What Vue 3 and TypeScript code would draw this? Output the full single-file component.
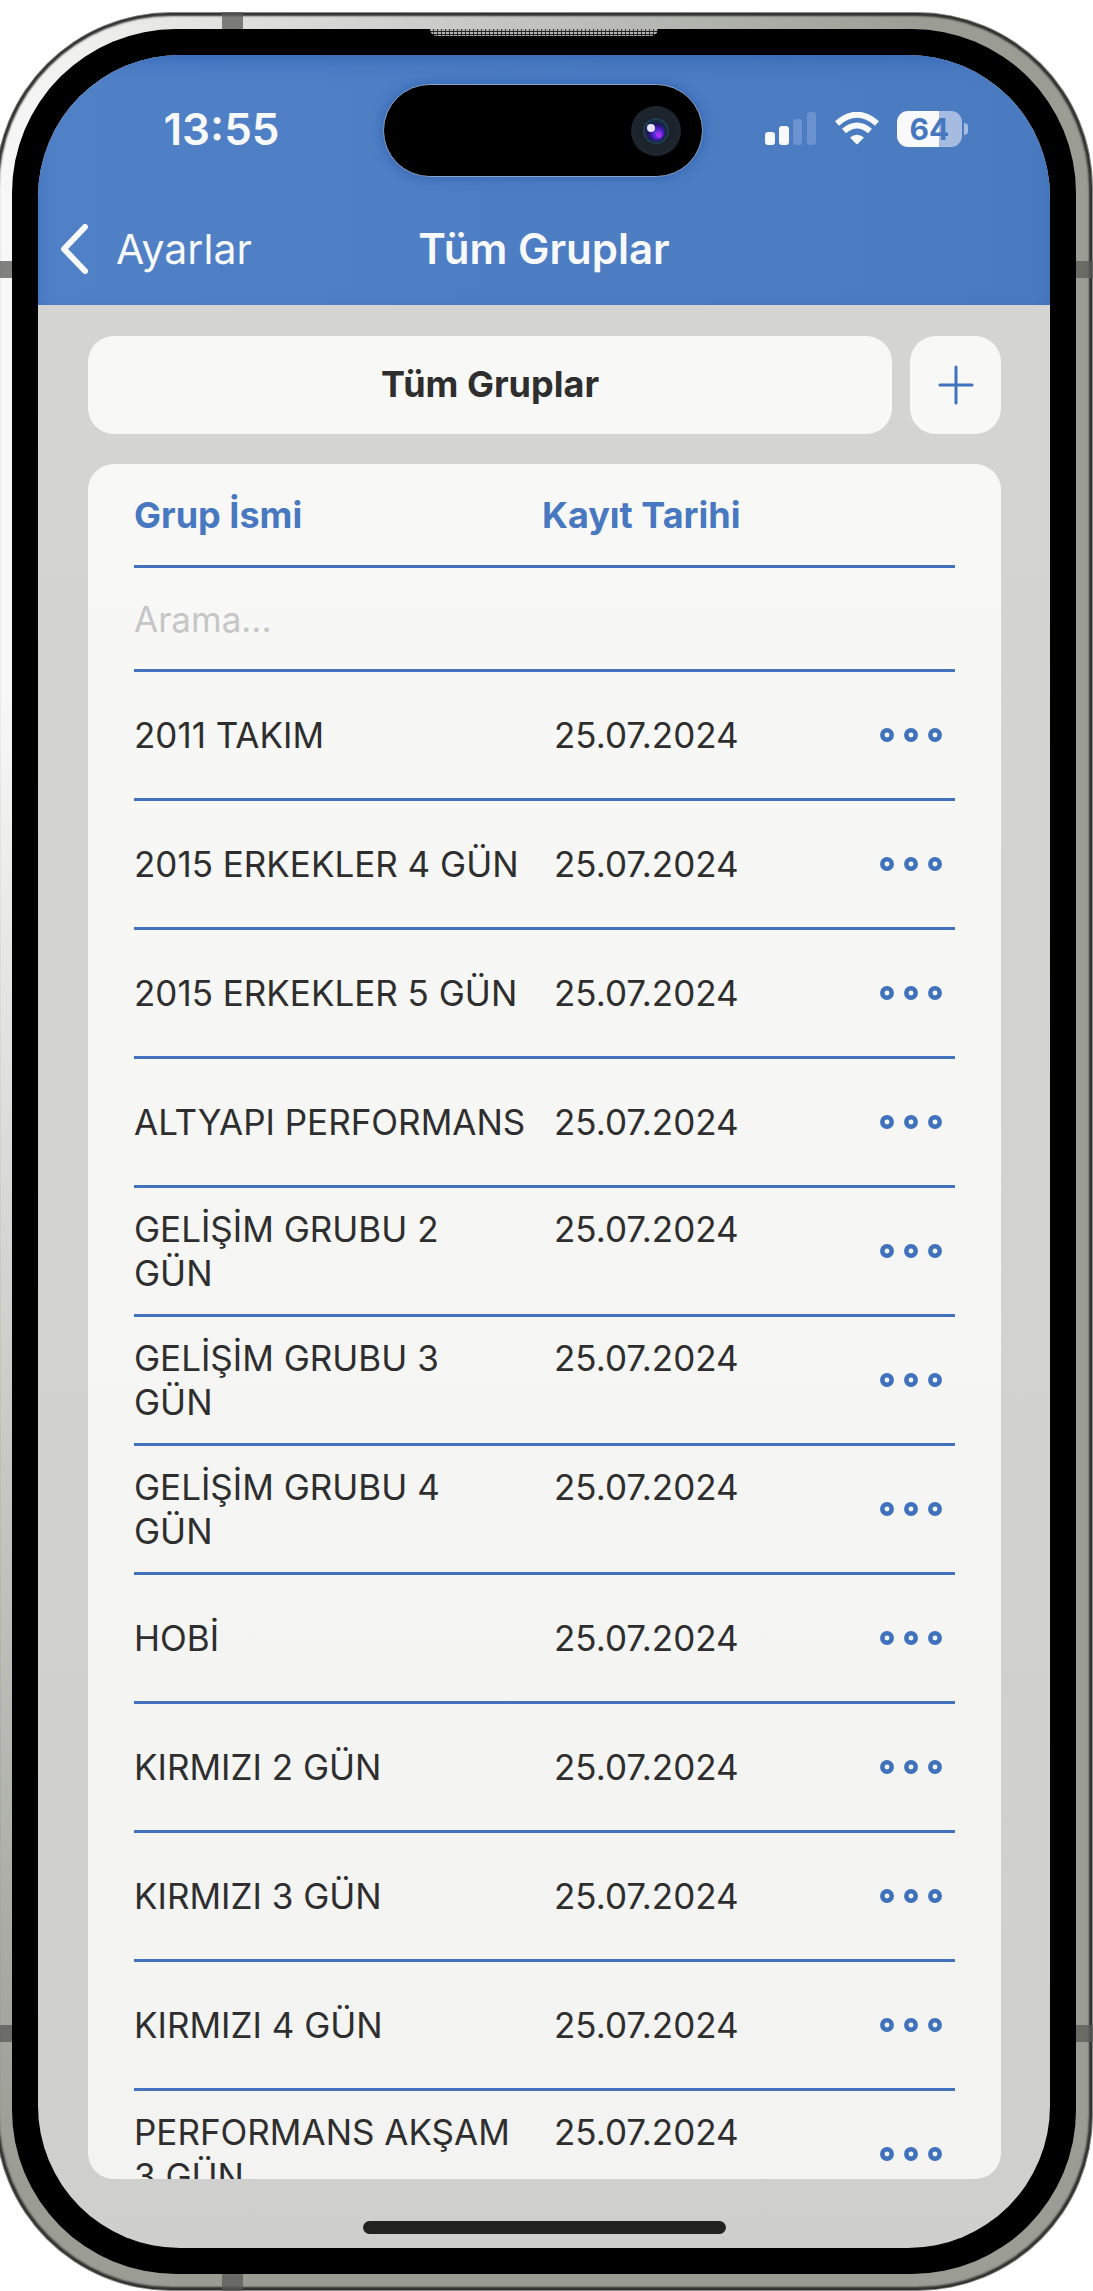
<script setup lang="ts">
interface Group {
  name: string
  date: string
}

const date = '25.07.2024'
const names: string[] = [
  '2011 TAKIM',
  '2015 ERKEKLER 4 GÜN',
  '2015 ERKEKLER 5 GÜN',
  'ALTYAPI PERFORMANS',
  'GELİŞİM GRUBU 2\nGÜN',
  'GELİŞİM GRUBU 3\nGÜN',
  'GELİŞİM GRUBU 4\nGÜN',
  'HOBİ',
  'KIRMIZI 2 GÜN',
  'KIRMIZI 3 GÜN',
  'KIRMIZI 4 GÜN',
  'PERFORMANS AKŞAM\n3 GÜN',
]
const groups: Group[] = names.map((name) => ({ name, date }))
</script>

<template>
  <div class="stage">
    <div class="phone">
      <span class="band band-top"></span>
      <span class="band band-bottom"></span>
      <span class="band band-left upper"></span>
      <span class="band band-left lower"></span>
      <span class="band band-right upper"></span>
      <span class="band band-right lower"></span>
      <div class="bezel">
        <span class="speaker"></span>
        <div class="screen">
          <header class="top">
            <div class="status">
              <span class="time">13:55</span>
              <div class="island">
                <svg class="camera" viewBox="0 0 50 50" aria-hidden="true">
                  <defs>
                    <radialGradient id="lens">
                      <stop offset="0" stop-color="#1c2a3c" />
                      <stop offset="0.55" stop-color="#1b222b" />
                      <stop offset="1" stop-color="#20262e" />
                    </radialGradient>
                    <radialGradient id="glass" cx="0.6" cy="0.6">
                      <stop offset="0" stop-color="#7a4be8" />
                      <stop offset="0.6" stop-color="#4a1fc0" />
                      <stop offset="1" stop-color="#24106e" />
                    </radialGradient>
                  </defs>
                  <circle cx="25" cy="25" r="25" fill="url(#lens)" />
                  <circle cx="25" cy="25" r="12" fill="#14283e" stroke="#1f3d54" stroke-width="2" />
                  <circle cx="25" cy="26" r="9" fill="url(#glass)" />
                  <circle cx="28" cy="29" r="3" fill="#a32cf0" />
                  <circle cx="20" cy="22" r="4" fill="#e6e4ff" />
                </svg>
              </div>
              <div class="indicators">
                <svg width="52" height="34" viewBox="0 0 52 34" aria-hidden="true">
                  <rect x="0" y="20" width="10" height="13" rx="3" fill="#f8f9fa" />
                  <rect x="14" y="14" width="10" height="19" rx="3" fill="#f8f9fa" />
                  <rect x="28" y="7" width="9" height="26" rx="3" fill="#6a93d0" />
                  <rect x="42" y="0" width="9" height="33" rx="3" fill="#6a93d0" />
                </svg>
                <svg width="44" height="34" viewBox="0 0 44 34" aria-hidden="true">
                  <g fill="none" stroke="#f8f9fa">
                    <path d="M2 11.500Q22-6 42 11.500" stroke-width="6" />
                    <path d="M9 19Q22 8 35 19" stroke-width="6" />
                  </g>
                  <path d="M15 25.500Q22 20 29 25.500L22.700 32Q22 32.700 21.300 32Z" fill="#f8f9fa" />
                </svg>
                <div class="battery"><span class="cell">64</span><span class="nub"></span></div>
              </div>
            </div>
            <nav class="bar">
              <a class="back" href="#">
                <svg width="28" height="50" viewBox="0 0 28 50" aria-hidden="true">
                  <path d="M25 3L4 25L25 47" fill="none" stroke="#f8f9fa" stroke-width="6" stroke-linecap="round" stroke-linejoin="round" />
                </svg>
                <span>Ayarlar</span>
              </a>
              <h1>Tüm Gruplar</h1>
            </nav>
          </header>
          <main class="content">
            <div class="actions">
              <button class="all" type="button">Tüm Gruplar</button>
              <button class="add" type="button" aria-label="Grup ekle">
                <svg width="36" height="40" viewBox="0 0 36 40" aria-hidden="true">
                  <path d="M18 2V38M2 20H34" stroke="#3f71bd" stroke-width="3" stroke-linecap="round" />
                </svg>
              </button>
            </div>
            <section class="card">
              <table>
                <thead>
                  <tr class="head">
                    <th scope="col">Grup İsmi</th>
                    <th scope="col">Kayıt Tarihi</th>
                  </tr>
                  <tr class="search">
                    <td><input type="search" placeholder="Arama..." aria-label="Arama" /></td>
                  </tr>
                </thead>
                <tbody>
                  <tr v-for="group in groups" :key="group.name">
                    <td class="name">{{ group.name }}</td>
                    <td>{{ group.date }}</td>
                    <td class="more">
                      <button type="button" :aria-label="group.name">
                        <svg width="62" height="14" viewBox="0 0 62 14" aria-hidden="true">
                          <g fill="none" stroke="#3f71bd" stroke-width="4.500">
                            <circle cx="7" cy="7" r="4.700" />
                            <circle cx="31" cy="7" r="4.700" />
                            <circle cx="55" cy="7" r="4.700" />
                          </g>
                        </svg>
                      </button>
                    </td>
                  </tr>
                </tbody>
              </table>
            </section>
          </main>
          <div class="home"></div>
        </div>
      </div>
    </div>
  </div>
</template>

<style>
body {
  margin: 0;
  background: #fff;
}
</style>

<style scoped>
* {
  box-sizing: border-box;
}

.stage {
  height: 100vh;
  padding-top: 12px;
  overflow: hidden;
  font-family: Inter, Roboto, sans-serif;
  color: #2e2e2e;
}

.phone {
  position: relative;
  height: 100%;
  margin-left: -5px;
  padding: 17px;
  border-radius: 176px;
  background:
    linear-gradient(transparent 30%, #9b9d95 95%),
    linear-gradient(to right, #f8f8f8, #c6c7c3 45%, #9b9d95 85%);
  box-shadow: inset 0 0 0 1px #8c8c88, inset 0 0 2px 4px #30312d;
}

.bezel {
  position: relative;
  height: 100%;
  padding: 26px;
  border-radius: 164px;
  background: #000;
}

.speaker {
  position: absolute;
  top: 0;
  left: 50%;
  width: 228px;
  height: 7px;
  margin-left: -114px;
  border-radius: 0 0 8px 8px;
  background:
    linear-gradient(transparent 2px, #222 2px 3px, transparent 3px 5px, #222 5px 6px, transparent 6px),
    repeating-linear-gradient(to right, #b0b0ac 0 3px, #3c3c3a 3px 4px);
}

.band {
  position: absolute;
  background: rgba(90, 90, 88, 0.75);
}

.band-top,
.band-bottom {
  left: 227px;
  width: 21px;
  height: 17px;
}

.band-top {
  top: 0;
}

.band-bottom {
  bottom: 0;
}

.band-left,
.band-right {
  width: 17px;
  height: 17px;
}

.band-left {
  left: 0;
}

.band-right {
  right: 0;
}

.upper {
  top: 249px;
}

.lower {
  bottom: 249px;
}

.screen {
  display: flex;
  flex-direction: column;
  height: 100%;
  border-radius: 142px;
  overflow: hidden;
  background: linear-gradient(#d5d5d4, #cfcfce);
}

.top {
  display: flex;
  flex-direction: column;
  flex: none;
  height: 250px;
  background: linear-gradient(to right, #5080c6, #4a7abf);
  box-shadow: inset 0 8px 20px -6px #2f64b4;
  color: #f8f9fa;
}

.status {
  display: grid;
  grid-template-columns: 1fr 320px 1fr;
  height: 152px;
  padding: 29px 2px 0 0;
}

.time {
  justify-self: center;
  padding-left: 22px;
  font-size: 44px;
  font-weight: 600;
  line-height: 90px;
}

.island {
  display: flex;
  align-items: center;
  justify-content: flex-end;
  height: 93px;
  padding-right: 21px;
  border: 1px solid #8ca4c8;
  border-radius: 47px;
  background: #000;
  box-shadow: 0 0 12px #2f64b4;
}

.camera {
  width: 50px;
  height: 50px;
}

.indicators {
  display: flex;
  align-items: center;
  justify-content: flex-end;
  gap: 18px;
  height: 90px;
  padding-right: 80px;
}

.battery {
  display: flex;
  align-items: center;
  gap: 2px;
}

.cell {
  width: 65px;
  height: 36px;
  border-radius: 11px;
  background: linear-gradient(to right, #f8f9fa 64%, #a5bbe0 64%);
  color: #4677be;
  font-size: 30px;
  font-weight: 700;
  line-height: 36px;
  text-align: center;
}

.nub {
  width: 4px;
  height: 12px;
  border-radius: 0 6px 6px 0;
  background: #a5bbe0;
}

.bar {
  display: grid;
  grid-template-columns: 1fr auto 1fr;
  align-items: center;
  height: 84px;
}

.back {
  display: flex;
  align-items: center;
  gap: 28px;
  padding-left: 22px;
  color: inherit;
  font-size: 41px;
  line-height: 50px;
  text-decoration: none;
}

h1 {
  margin: 0;
  font-size: 42px;
  font-weight: 600;
  line-height: 50px;
}

.content {
  display: flex;
  flex: 1;
  flex-direction: column;
  gap: 30px;
  min-height: 0;
  padding: 31px 49px 0 50px;
}

.actions {
  display: flex;
  gap: 18px;
}

button {
  padding: 0;
  border: 0;
  background: none;
  color: inherit;
  font: inherit;
}

.all,
.add {
  display: flex;
  align-items: center;
  justify-content: center;
  height: 98px;
  border-radius: 26px;
  background: #f8f8f7;
}

.all {
  flex: 1;
  padding-bottom: 2px;
  font-size: 36px;
  font-weight: 700;
}

.add {
  width: 91px;
}

.card {
  flex: 1;
  min-height: 0;
  padding: 0 46px;
  border-radius: 26px;
  overflow: hidden;
  background: linear-gradient(#f8f8f7, #f3f3f2);
}

table {
  display: block;
  font-size: 35px;
  line-height: 44px;
}

thead,
tbody {
  display: block;
}

tr {
  display: grid;
  grid-template-columns: 420px 1fr auto;
  align-content: center;
  height: 129px;
  border-bottom: 3px solid #4272bb;
}

th,
td {
  padding: 0;
  text-align: left;
}

.name {
  white-space: pre-line;
}

.head {
  height: 104px;
  grid-template-columns: 408px 1fr;
  color: #4878c0;
}

th {
  font-size: 36px;
  font-weight: 700;
}

.search {
  height: 104px;
  grid-template-columns: 1fr;
}

input {
  display: block;
  width: 100%;
  padding: 0;
  border: 0;
  outline: 0;
  background: none;
  font: inherit;
}

input::placeholder {
  color: #c6c6c6;
  opacity: 1;
}

.more {
  display: flex;
  align-self: center;
  padding-right: 13px;
}

.more button,
.more svg {
  display: block;
}

.home {
  flex: none;
  align-self: center;
  width: 363px;
  height: 13px;
  margin: 42px 0 14px;
  border-radius: 7px;
  background: #222321;
}
</style>
